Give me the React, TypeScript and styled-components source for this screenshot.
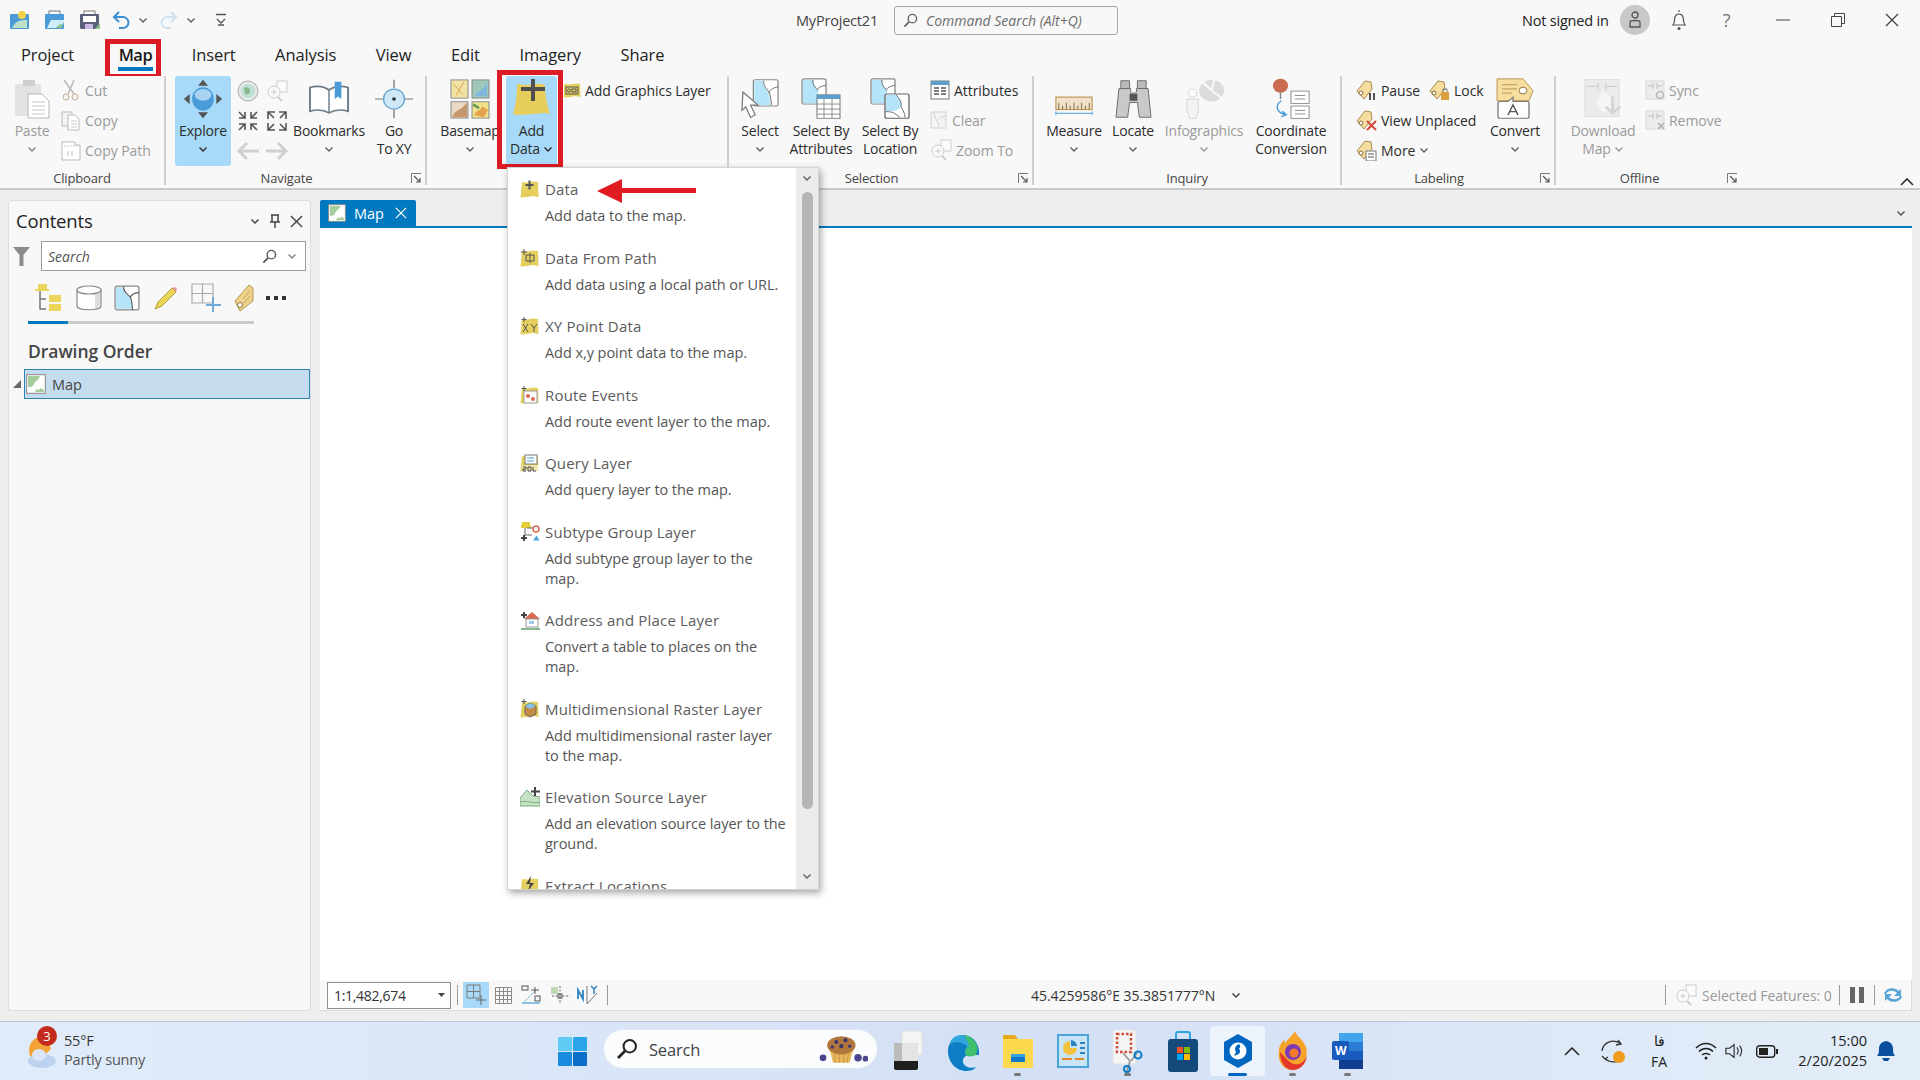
import React from 'react';
import styled, { createGlobalStyle } from 'styled-components';

const Global = createGlobalStyle`
  html, body { margin: 0; padding: 0; background: #eeeeee; }
  body { font-family: "Open Sans", "Noto Sans", sans-serif; }
  #root { width: 1920px; height: 1080px; overflow: hidden; }
  * { box-sizing: border-box; }
`;

const Page = styled.div`
  width: 1920px; height: 1080px; display: flex; flex-direction: column; position: relative; color: #333; overflow: hidden;
`;
const TitleBar = styled.div`
  height: 40px; background: #f8f8f8; display: flex; align-items: center; padding-left: 9px; flex: none;
`;
const Qat = styled.div`
  width: 787px; flex: none; display: flex; align-items: center; gap: 13px;
`;
const QatSlot = styled.span<{ $ml: number }>`
  display: inline-flex; margin-left: ${p => p.$ml}px;
`;
const ProjectName = styled.div`
  width: 98px; flex: none; font-size: 14.5px; color: #444; letter-spacing: -.2px;
`;
const CommandSearch = styled.div`
  width: 224px; flex: none; height: 29px; border: 1px solid #a5a5a5; border-radius: 3px; display: flex; align-items: center; gap: 8px; padding-left: 8px;
  font-style: italic; font-size: 14px; color: #6e6e6e; letter-spacing: 0; white-space: nowrap;
`;
const TitleRight = styled.div`
  margin-left: 404px; display: flex; align-items: center; font-size: 14.5px; color: #222; letter-spacing: -.2px; white-space: nowrap; flex: none;
`;
const Avatar = styled.div`
  width: 30px; height: 30px; border-radius: 50%; background: #c8c8c8; margin-left: 11px; display: flex; align-items: center; justify-content: center; flex: none;
`;
const WinIcon = styled.div<{ $w: number }>`
  width: ${p => p.$w}px; display: flex; justify-content: center; font-size: 18px; color: #777; flex: none;
`;
const TabRow = styled.div`
  height: 36px; background: #f8f8f8; display: flex; align-items: flex-start; padding-left: 21px; gap: 39.5px; font-size: 16.5px; color: #222; flex: none;
`;
const Tab = styled.div<{ $on?: boolean }>`
  position: relative; height: 30px; line-height: 30px; letter-spacing: -.1px;
  ${p => p.$on ? `
    font-weight: 600; color: #1a1a1a; letter-spacing: -.5px; margin-left: 5px;
    &::before { content: ""; position: absolute; left: -1px; right: -1px; bottom: -1px; height: 4px; background: #0079c1; }
    &::after { content: ""; position: absolute; left: -14px; right: -9px; top: -1px; bottom: -9px; border: 5px solid #dc1c24; }
  ` : ''}
`;
const Ribbon = styled.div`
  height: 114px; background: #f8f8f8; border-bottom: 2px solid #c9c9c9; display: flex; flex: none; position: relative;
`;
const Group = styled.div<{ $w: number; $pad: number; $last?: boolean }>`
  width: ${p => p.$w}px; flex: none; height: 109px; ${p => p.$last ? '' : 'border-right: 2px solid #cfcfcf;'}
  display: flex; flex-direction: column; position: relative; padding-left: ${p => p.$pad}px;
`;
const GroupBody = styled.div`
  height: 91px; display: flex; align-items: flex-start;
`;
const GroupLabel = styled.div<{ $launch?: boolean }>`
  position: absolute; left: 0; right: 0; bottom: -4px; height: 22px; line-height: 22px; text-align: center; font-size: 13px; color: #444; letter-spacing: -.15px;
  padding-right: ${p => p.$launch ? 18 : 0}px;
`;
const Launcher = styled.span`
  position: absolute; right: 3px; bottom: 1px; display: inline-flex;
`;
const Big = styled.div<{ $w: number; $on?: boolean; $off?: boolean; $mr?: number; $ann?: boolean }>`
  width: ${p => p.$w}px; flex: none; height: 90px; display: flex; flex-direction: column; align-items: center; position: relative;
  font-size: 14px; line-height: 18px; letter-spacing: -.2px; text-align: center; white-space: nowrap; border-radius: 3px;
  color: ${p => p.$off ? '#9a9a9a' : '#2c2c2c'};
  background: ${p => p.$on ? '#a6daf8' : 'transparent'};
  margin-right: ${p => p.$mr || 0}px;
  ${p => p.$ann ? `
    &::after { content: ""; position: absolute; left: -9px; right: -6px; top: -6px; bottom: -3px; border: 5px solid #dc1c24; }
  ` : ''}
`;
const BigIcon = styled.div`
  height: 46px; display: flex; align-items: center; justify-content: center; flex: none;
`;
const Chev = styled.span<{ $inline?: boolean }>`
  display: inline-flex; align-items: center; justify-content: center; height: 18px;
  ${p => p.$inline ? 'margin-left: 3px; vertical-align: top;' : ''}
`;
const SmallCol = styled.div<{ $w?: number }>`
  display: flex; flex-direction: column; margin-top: -1px; ${p => p.$w ? `width: ${p.$w}px; flex: none;` : ''}
`;
const SmallBtn = styled.div<{ $off?: boolean; $mr?: number }>`
  height: 30px; display: flex; align-items: center; gap: 4px; font-size: 14px; letter-spacing: -.05px; white-space: nowrap;
  color: ${p => p.$off ? '#9a9a9a' : '#2c2c2c'}; margin-right: ${p => p.$mr || 0}px;
`;
const SmallRow = styled.div`
  display: flex; height: 30px;
`;
const NavGrid = styled.div`
  width: 58px; flex: none; display: grid; grid-template-columns: 29px 29px; grid-auto-rows: 30px; justify-items: center; align-items: center;
`;
const Collapse = styled.span`
  position: absolute; right: 6px; bottom: 2px; display: inline-flex;
`;
const Main = styled.div`
  flex: none; height: 831px; background: #eeeeee; display: flex; padding: 10px 8px 10px 8px; gap: 9px;
`;
const ContentsPanel = styled.div`
  width: 303px; flex: none; background: #f8f8f8; border: 1px solid #dedede; border-radius: 3px 3px 0 0; display: flex; flex-direction: column;
`;
const PanelHead = styled.div`
  height: 40px; display: flex; align-items: center; padding: 0 7px 2px 7px; font-size: 18.5px; color: #222; letter-spacing: -.15px; flex: none;
`;
const PanelTitle = styled.div`
  flex: 1;
`;
const PanelTools = styled.div`
  display: flex; align-items: center; gap: 9px; margin-top: 2px;
`;
const FilterRow = styled.div`
  display: flex; align-items: center; padding: 0 4px; gap: 11px; flex: none; height: 30px;
`;
const SearchBox = styled.div`
  width: 266px; height: 30px; background: #fff; border: 1px solid #9a9a9a; display: flex; align-items: center; padding: 0 8px 0 6px; gap: 10px;
  font-style: italic; font-size: 14px; color: #555; letter-spacing: 0;
`;
const SearchText = styled.div`
  flex: 1;
`;
const ViewTabs = styled.div`
  display: flex; align-items: center; margin: 13px 0 0 24px; height: 28px; flex: none; gap: 12.5px;
`;
const ViewRule = styled.div`
  margin: 9px 0 0 19px; width: 226px; height: 3px; background: #c9c9c9; flex: none;
`;
const ViewRuleOn = styled.div`
  width: 40px; height: 3px; background: #0079c1;
`;
const Heading = styled.div`
  margin: 15px 0 0 19px; font-size: 17.5px; font-weight: 600; color: #444; letter-spacing: -.05px; height: 24px; line-height: 24px; flex: none;
`;
const TreeRow = styled.div`
  margin: 6px 0 0; display: flex; align-items: center; flex: none; height: 30px;
`;
const TreeArrow = styled.span`
  width: 15px; flex: none; display: inline-flex; justify-content: flex-end; padding-right: 3px;
`;
const TreeItem = styled.div`
  flex: 1; height: 30px; background: #c4dcee; border: 1px solid #2d86b8; display: flex; align-items: center; padding-left: 1px; gap: 6px; font-size: 14.5px; color: #444;
`;
const MapDock = styled.div`
  width: 1592px; flex: none; display: flex; flex-direction: column;
`;
const DockTabs = styled.div`
  height: 28px; display: flex; align-items: flex-end; justify-content: space-between; border-bottom: 2px solid #0079c1; flex: none; padding-right: 6px;
`;
const DockTab = styled.div`
  width: 96px; height: 26px; background: #0079c1; color: #fff; font-size: 14.5px; display: flex; align-items: center; padding-left: 8px; gap: 8px; border-radius: 2px 2px 0 0;
`;
const DockClose = styled.span`
  display: inline-flex; margin-left: 3px;
`;
const DockChevron = styled.span`
  display: inline-flex; align-self: center;
`;
const MapCanvas = styled.div`
  flex: 1; background: #fff;
`;
const StatusBar = styled.div`
  height: 31px; background: #f8f8f8; border-bottom: 1px solid #dcdcdc; border-right: 1px solid #dcdcdc; display: flex; align-items: center; padding-left: 7px; flex: none; font-size: 14px; color: #333; letter-spacing: -.3px;
`;
const ScaleBox = styled.div`
  width: 125px; height: 27px; border: 1px solid #8f8f8f; background: #fff; display: flex; align-items: center; justify-content: space-between; padding: 0 5px 0 6px;
`;
const StatusSep = styled.span<{ $ml: number }>`
  width: 1px; height: 20px; background: #9a9a9a; margin-left: ${p => p.$ml}px; flex: none;
`;
const StatusBtn = styled.span<{ $on?: boolean; $w: number; $ml?: number }>`
  width: ${p => p.$w}px; height: 26px; display: inline-flex; align-items: center; justify-content: center; flex: none;
  background: ${p => p.$on ? '#a6daf8' : 'transparent'}; margin-left: ${p => p.$ml || 0}px;
`;
const Coords = styled.div`
  margin-left: 423px; width: 215px; display: flex; align-items: center; gap: 16px; white-space: nowrap; flex: none; letter-spacing: -.05px;
`;
const Selected = styled.div`
  margin-left: 9px; display: flex; align-items: center; gap: 5px; color: #9a9a9a; white-space: nowrap; width: 165px; flex: none; letter-spacing: -.05px;
`;
const Taskbar = styled.div`
  flex: 1; border-top: 1px solid #b9c5d2; background: linear-gradient(90deg,#e0ecf9 0%,#d9e6f7 30%,#d3e0f5 55%,#dbe6f6 75%,#e4eef9 100%); display: flex; align-items: center; position: relative;
`;
const Weather = styled.div`
  width: 558px; flex: none; display: flex; align-items: center; padding-left: 27px; gap: 7px;
`;
const WeatherIcon = styled.div`
  position: relative; width: 30px; height: 36px; flex: none; margin-top: 2px;
`;
const Badge = styled.div`
  position: absolute; left: 10px; top: -8px; width: 20px; height: 20px; border-radius: 50%; background: #c42b1c; color: #fff; font-size: 13px; display: flex; align-items: center; justify-content: center;
`;
const WeatherText = styled.div`
  font-size: 14.5px; line-height: 19.5px; color: #333; letter-spacing: -.2px; margin-top: -2px;
`;
const WeatherSub = styled.div`
  color: #555;
`;
const StartBtn = styled.div`
  width: 46px; flex: none; display: flex;
`;
const TaskSearch = styled.div`
  width: 273px; height: 38px; background: #fbfcfe; border-radius: 19px; box-shadow: 0 0 0 1px #dfe6f0; display: flex; align-items: center; padding-left: 12px; gap: 11px; font-size: 16.5px; color: #444; flex: none; margin-top: -4px; letter-spacing: -.2px; position: relative;
`;
const Muffin = styled.span`
  position: absolute; right: 9px; top: 5px; display: inline-flex;
`;
const Apps = styled.div`
  display: flex; margin-left: 3px; flex: none;
`;
const AppSlot = styled.div<{ $active?: boolean; $dot?: boolean }>`
  width: 55px; height: 50px; display: flex; align-items: center; justify-content: center; position: relative; border-radius: 4px;
  ${p => p.$active ? 'background: #eef4fb;' : ''}
  ${p => p.$dot ? `&::after { content: ""; position: absolute; left: 50%; bottom: 0; width: ${p.$active ? 19 : 7}px; margin-left: ${p.$active ? -9.5 : -3.5}px; height: 3px; border-radius: 2px; background: ${p.$active ? '#0067c0' : '#777'}; }` : ''}
`;
const Tray = styled.div`
  display: flex; align-items: center; margin-left: 183px; flex: none; color: #1c1c1c;
`;
const TrayIcon = styled.span<{ $w: number; $ml?: number }>`
  width: ${p => p.$w}px; display: inline-flex; justify-content: center; align-items: center; flex: none; margin-left: ${p => p.$ml || 0}px;
`;
const Lang = styled.div`
  width: 38px; text-align: center; font-size: 14px; line-height: 21px; color: #222; flex: none;
`;
const Clock = styled.div`
  width: 78px; text-align: right; font-size: 14.5px; line-height: 20px; color: #222; flex: none; letter-spacing: 0;
`;
const Menu = styled.div`
  position: absolute; left: 507px; top: 167px; width: 312px; height: 723px; background: #fff; border: 1px solid #d4d4d4; display: flex; overflow: hidden;
  box-shadow: 2px 3px 7px rgba(0,0,0,.35); z-index: 3;
`;
const MenuList = styled.div`
  flex: 1; padding: 11px 0 0 12px; overflow: hidden;
`;
const MenuItem = styled.div<{ $lines?: number }>`
  display: flex; gap: 5px; height: ${p => p.$lines === 2 ? 88.5 : 68.5}px;
`;
const MenuIcon = styled.span`
  width: 20px; height: 20px; flex: none; display: inline-flex;
`;
const MenuTitle = styled.div`
  font-size: 15px; line-height: 20px; color: #5c5c5c; margin-bottom: 7px; letter-spacing: .18px; white-space: nowrap;
`;
const MenuDesc = styled.div`
  font-size: 14.5px; line-height: 20px; color: #555; white-space: pre-line; letter-spacing: -.06px;
`;
const ScrollCol = styled.div`
  width: 22px; flex: none; background: #ebebeb; display: flex; flex-direction: column; align-items: center; padding-top: 7px;
`;
const ScrollThumb = styled.div`
  width: 11px; height: 617px; background: #b5b5b5; border-radius: 6px; margin: 10px 0 64px; flex: none;
`;
const RedArrow = styled.svg`
  position: absolute; left: 597px; top: 178px; z-index: 4;
`;

type I = { s?: number };
const C = ({ d = '#666', o = 1 }: { d?: string; o?: number }) => (
  <svg width="10" height="7" viewBox="0 0 10 7" opacity={o}><path d="M1.5 1.5 5 5l3.5-3.5" fill="none" stroke={d} strokeWidth="1.5" /></svg>
);
const X = ({ s = 14, c = '#444', w = 1.3 }: { s?: number; c?: string; w?: number }) => (
  <svg width={s} height={s} viewBox="0 0 14 14"><path d="M1 1l12 12M13 1 1 13" stroke={c} strokeWidth={w} /></svg>
);
const MapLines = () => <path d="M9 1c-1 5 3 7 6 10 2 4 2 8 2 12M15 11c2-3 4-4 8-4" fill="none" stroke="#555" strokeWidth="1" />;
const MapSheet = ({ s = 26 }: I) => (
  <svg width={s} height={s} viewBox="0 0 24 24"><rect x="1" y="1" width="22" height="22" rx="2" fill="#fff" stroke="#888" strokeWidth="1.2" /><path d="M2 2h7c-1 5 3 7 6 9 2 4 2 8 2 11H2z" fill="#b5e3f7" /><MapLines /></svg>
);
const Launch = () => (
  <svg width="11" height="11" viewBox="0 0 11 11"><path d="M.5 10V.5H10" fill="none" stroke="#777" /><path d="M3 3l6 6M9 5v4H5" fill="none" stroke="#555" strokeWidth="1.2" /></svg>
);
const Folder = ({ s = 20, plus = false, children }: { s?: number; plus?: boolean; children?: React.ReactNode }) => (
  <svg width={s} height={s} viewBox="0 0 20 20">
    <path d="M2 3l5 .5 6-1 5 .5.5 15-6-1-5 1-7 .5z" fill="#e5cf5f" />
    {plus && <path d="M9.5 1.5v9M5.5 6h8" stroke="#555" strokeWidth="2" />}
    {children}
  </svg>
);
const Tag = ({ children }: { children?: React.ReactNode }) => (
  <svg width="22" height="22" viewBox="0 0 22 22">
    <path d="M2 12 10 2l6 1 1 7-8 10z" fill="#f6dda0" stroke="#a88a52" /><circle cx="6" cy="14" r="2" fill="#fff" stroke="#8a6d3b" />{children}
  </svg>
);
const Paste = () => (
  <svg width="36" height="42" viewBox="0 0 36 42"><rect x="1" y="6" width="26" height="32" rx="2" fill="#e3e3e3" /><rect x="9" y="2" width="12" height="6" rx="1" fill="#cfcfcf" /><path d="M14 16h14l7 7v17H14z" fill="#fff" stroke="#b5b5b5" /><path d="M18 24h13M18 28h13M18 32h13M18 36h13" stroke="#c5c5c5" /></svg>
);
const Cut = () => <svg width="20" height="22" viewBox="0 0 20 22"><path d="M3 1l10 14M13 1 7 15" stroke="#b8b8b8" strokeWidth="1.5" /><circle cx="5" cy="18" r="3" fill="none" stroke="#c2a98c" /><circle cx="14" cy="18" r="3" fill="none" stroke="#c2a98c" /></svg>;
const Copy = () => <svg width="20" height="22" viewBox="0 0 20 22"><path d="M1 3h10v14H1z" fill="#f4f4f4" stroke="#bbb" /><path d="M7 6h7l4 4v11H7z" fill="#fff" stroke="#bbb" /><path d="M10 12h6M10 15h6M10 18h6" stroke="#ccc" /></svg>;
const CopyPath = () => <svg width="20" height="22" viewBox="0 0 20 22"><path d="M1 3h13v3h5v15H1z" fill="#fff" stroke="#bbb" /><path d="M3 7h14" stroke="#ccc" strokeDasharray="2 1" /><path d="M7 12v5M11 12v5" stroke="#bbb" /></svg>;
const Explore = () => (
  <svg width="40" height="40" viewBox="0 0 48 48"><path d="M24 1l6 7H18zM24 47l-6-7h12zM1 24l7-6v12zM47 24l-7 6V18z" fill="#555" /><ellipse cx="24" cy="24" rx="13" ry="14" fill="#4a9bd8" /><ellipse cx="24" cy="19" rx="10" ry="7" fill="#a9d3f2" /></svg>
);
const Globe = () => <svg width="22" height="22" viewBox="0 0 22 22"><circle cx="11" cy="11" r="10" fill="#e8e8e8" stroke="#aaa" /><circle cx="11" cy="11" r="7" fill="#bfe0d4" /><path d="M7 8c3-2 6 0 6 3s-3 4-5 3z" fill="#89b88d" /></svg>;
const ZoomFull = () => <svg width="22" height="22" viewBox="0 0 22 22" opacity=".55"><rect x="11" y="1" width="10" height="11" fill="#fff" stroke="#aaa" /><circle cx="8" cy="12" r="6" fill="#fff" stroke="#aaa" /><path d="M5 12h6M8 9v6" stroke="#aaa" /><path d="M12 17l4 4" stroke="#b9a88f" strokeWidth="2" /></svg>;
const Arrows4 = ({ out }: { out?: boolean }) => (
  <svg width="22" height="22" viewBox="0 0 22 22"><g stroke="#555" strokeWidth="1.6" fill="none">
    {out ? <path d="M9 2H2v7M2 2l6 6M13 2h7v7M20 2l-6 6M9 20H2v-7M2 20l6-6M13 20h7v-7M20 20l-6-6" /> : <path d="M2 8h6V2M8 8 2 2M20 8h-6V2M14 8l6-6M2 14h6v6M8 14l-6 6M20 14h-6v6M14 14l6 6" />}
  </g></svg>
);
const Back = ({ flip }: { flip?: boolean }) => <svg width="24" height="20" viewBox="0 0 24 20" style={flip ? { transform: 'scaleX(-1)' } : undefined}><path d="M11 2 3 10l8 8M3 10h20" fill="none" stroke="#d0d0d0" strokeWidth="3" /></svg>;
const Bookmarks = () => <svg width="40" height="36" viewBox="0 0 42 44" preserveAspectRatio="none"><path d="M1 8c6-2 14-2 20 3 6-5 14-5 20-3v29c-6-2-14-2-20 2-6-4-14-4-20-2z" fill="#fff" stroke="#6d7b86" strokeWidth="2" /><path d="M21 11v28" stroke="#6d7b86" strokeWidth="1.5" /><path d="M27 1h7v21l-3.500-3-3.500 3z" fill="#4a9bd8" /></svg>;
const GoTo = () => <svg width="40" height="40" viewBox="0 0 42 48" preserveAspectRatio="none"><path d="M21 1v10M21 37v10M1 24h9M32 24h9" stroke="#777" strokeWidth="1.4" /><ellipse cx="21" cy="24" rx="11" ry="12" fill="#cfe8f8" stroke="#6aa7d0" strokeWidth="1.5" /><circle cx="21" cy="24" r="2" fill="#333" /></svg>;
const BasemapI = () => (
  <svg width="40" height="40" viewBox="0 0 40 44" preserveAspectRatio="none"><rect x="1" y="1" width="17" height="20" fill="#f2e2a4" stroke="#888" /><path d="M3 5l10 12M14 3 6 18" stroke="#d9a34f" /><rect x="22" y="1" width="17" height="20" fill="#9fc8b8" stroke="#888" /><path d="M24 19c5-8 8-4 13-16v16z" fill="#7fb7dd" /><rect x="1" y="25" width="17" height="18" fill="#ead9c5" stroke="#888" /><path d="M2 42c4-10 8-6 15-16v16z" fill="#c5976b" /><rect x="22" y="25" width="17" height="18" fill="#efe28d" stroke="#888" /><path d="M24 40c4-8 6-3 8-10l6 4-4 8z" fill="#e3a24b" /><path d="M23 28l6 4" stroke="#6ba35c" strokeWidth="3" /></svg>
);
const AddDataI = () => (
  <svg width="40" height="46" viewBox="0 0 40 46"><path d="M5 8c3 0 5 1 8 1 8 0 12-2 17-1l3 1c0 10 2 20 5 29-6-2-12 0-17 0-8 0-14 2-20 0 3-9 4-20 4-30z" fill="#e7ce5c" /><path d="M21 3v22M9 13h24" stroke="#4f4f4f" strokeWidth="4" /></svg>
);
const Graphics = () => <svg width="18" height="18" viewBox="0 0 18 18"><path d="M1 3l6 .5 5-1 5 .5.500 13-5-1-5 1-6.500.5z" fill="#e5cf5f" /><rect x="3" y="6" width="12" height="7" fill="none" stroke="#555" /><circle cx="6" cy="9.500" r="1.500" fill="none" stroke="#555" /><rect x="9" y="8" width="4" height="3" fill="none" stroke="#555" /></svg>;
const SelectI = () => <svg width="38" height="42" viewBox="0 0 40 48" preserveAspectRatio="none"><rect x="13" y="2" width="26" height="30" rx="2" fill="#fff" stroke="#888" strokeWidth="1.300" /><path d="M14 3h10c-2 5 3 10 5 14 1 5 2 9 2 14H14z" fill="#b5e3f7" /><path d="M24 3c-1 6 4 10 6 14 1 5 2 9 2 14M29 17c2-4 5-6 10-7" fill="none" stroke="#666" /><path d="M2 16l16 15-8 0 5 11-5 3-5-12-4 4z" fill="#fff" stroke="#777" strokeWidth="1.300" /></svg>;
const SelAttr = () => <svg width="40" height="42" viewBox="0 0 40 50" preserveAspectRatio="none"><rect x="1" y="1" width="24" height="30" rx="2" fill="#fff" stroke="#888" strokeWidth="1.300" /><path d="M2 2h11c-2 5 2 9 4 13v15H2z" fill="#b5e3f7" /><path d="M12 2c-1 6 3 10 5 13M16 14c2-3 5-5 9-5" fill="none" stroke="#666" /><rect x="16" y="20" width="23" height="28" fill="#fff" stroke="#777" /><rect x="16" y="20" width="23" height="5" fill="#5e9ecb" /><path d="M16 31h23M16 37h23M16 43h23M23 25v23M31 25v23" stroke="#888" /></svg>;
const SelLoc = () => <svg width="40" height="42" viewBox="0 0 40 50" preserveAspectRatio="none"><rect x="1" y="1" width="24" height="30" rx="2" fill="#fff" stroke="#888" strokeWidth="1.300" /><path d="M2 2h11c-2 5 2 9 4 13v15H2z" fill="#b5e3f7" /><path d="M12 2c-1 6 3 10 5 13M16 14c2-3 5-5 9-5" fill="none" stroke="#666" /><rect x="15" y="19" width="24" height="29" rx="2" fill="#fff" stroke="#666" strokeWidth="1.300" /><path d="M16 20h10c3 4 6 8 5 14-3 5-8 6-15 6z" fill="#b5e3f7" /><path d="M26 20c3 4 6 8 5 14 2 5 4 8 4 13M16 40c7 0 9 2 14 7" fill="none" stroke="#666" /></svg>;
const AttrI = () => <svg width="20" height="20" viewBox="0 0 20 20"><rect x="1" y="1" width="18" height="18" fill="#fff" stroke="#777" /><rect x="1" y="1" width="18" height="4" fill="#5e9ecb" /><path d="M4 8h5M11 8h5M4 11h5M11 11h5M4 14h5M11 14h5" stroke="#555" strokeWidth="1.300" /></svg>;
const ClearI = () => <svg width="18" height="20" viewBox="0 0 18 20" opacity=".5"><rect x="1" y="2" width="15" height="16" fill="#f1f1f1" stroke="#aaa" /><path d="M4 3c1 6 4 7 5 14M9 9c2-2 4-3 7-3" fill="none" stroke="#aaa" /></svg>;
const Measure = () => <svg width="40" height="46" viewBox="0 0 42 46"><rect x="2" y="21" width="38" height="13" fill="#f0e2cb" stroke="#c09a5e" strokeWidth="1.300" /><path d="M5 34v-7M9 34v-4M13 34v-7M17 34v-4M21 34v-7M25 34v-4M29 34v-7M33 34v-4M37 34v-7" stroke="#80663c" /><path d="M2 38h38M2 36v4M40 36v4" stroke="#4a9bd8" /></svg>;
const Bino = () => <svg width="37" height="40" viewBox="0 0 38 46" preserveAspectRatio="none"><path d="M6 2h9v9H6zM23 2h9v9h-9z" fill="#bbb" stroke="#666" /><path d="M4 11h12v9h6v-9h12l3 33H25l-2-17h-8l-2 17H1z" fill="#c9c9c9" stroke="#666" /><rect x="15" y="15" width="8" height="10" fill="#555" /><path d="M14 16h10" stroke="#fff" /></svg>;
const Info = () => <svg width="42" height="42" viewBox="0 0 44 50" opacity=".45" preserveAspectRatio="none"><circle cx="30" cy="15" r="13" fill="#bbb" /><path d="M30 15 20 4M30 15l12 10M30 15l3-14" stroke="#fff" strokeWidth="2" /><circle cx="10" cy="18" r="4.500" fill="#fff" stroke="#aaa" /><path d="M4 25h12v14l-2 9H7l-3-9z" fill="#eee" stroke="#aaa" /></svg>;
const Coord = () => <svg width="42" height="44" viewBox="0 0 44 50" preserveAspectRatio="none"><circle cx="11" cy="10" r="8" fill="#cb6b50" /><path d="M11 17v8" stroke="#888" strokeWidth="1.500" /><rect x="22" y="16" width="19" height="14" fill="#fff" stroke="#888" /><path d="M26 21h11M26 25h11" stroke="#888" /><rect x="22" y="33" width="19" height="14" fill="#fff" stroke="#888" /><path d="M26 38h11M26 42h11" stroke="#888" /><path d="M12 27c-7 5-6 13 5 16M13 39l4 4-5 2" fill="none" stroke="#4a9bd8" strokeWidth="1.600" /></svg>;
const Convert = () => <svg width="40" height="42" viewBox="0 0 40 50" preserveAspectRatio="none"><path d="M2 1h26l10 14-4 12-20 0-12 0z" fill="#f6dda0" stroke="#b5924e" /><path d="M7 8h15M7 13h15M7 18h10" stroke="#b5924e" /><circle cx="28" cy="15" r="4" fill="#fff" stroke="#8a6d3b" /><path d="M5 28h8l5-5v5h14a2 2 0 0 1 2 2v16a2 2 0 0 1-2 2H5a2 2 0 0 1-2-2V30a2 2 0 0 1 2-2z" fill="#fff" stroke="#777" strokeWidth="1.300" /><path d="M13 44l5-12 5 12M15 40h6" fill="none" stroke="#555" strokeWidth="1.500" /></svg>;
const Download = () => <svg width="40" height="42" viewBox="0 0 42 50" opacity=".45" preserveAspectRatio="none"><rect x="2" y="2" width="36" height="44" fill="#ddd" stroke="#bbb" /><path d="M4 10h12M24 10h12M16 6v8M24 6v8" stroke="#888" /><path d="M20 14l8 8 3 14-10 6-7-12z" fill="#f3f3f3" /><path d="M31 22v20M24 34l7 8 8-8" fill="none" stroke="#aaa" strokeWidth="3" /></svg>;
const SyncI = ({ rem }: { rem?: boolean }) => <svg width="20" height="20" viewBox="0 0 20 20" opacity=".5"><rect x="1" y="1" width="18" height="18" fill="#e2e2e2" stroke="#bbb" /><path d="M3 6h5M12 6h5M8 3v6M12 3v6" stroke="#888" />{rem ? <path d="M13 13l6 6M19 13l-6 6" stroke="#666" strokeWidth="1.500" /> : <circle cx="15" cy="15" r="3.500" fill="none" stroke="#777" strokeWidth="1.500" />}</svg>;

const MiniTreeI = () => <svg width="30" height="28" viewBox="0 0 30 28"><path d="M5 0h9v5H5z M2 5h14v2H2z" fill="#ecd558" /><path d="M7 7v18h6M7 15h6" fill="none" stroke="#777" strokeWidth="1.500" /><path d="M16 11h12v7H16zM16 20h12v7H16z" fill="#ecd558" /></svg>;
const Cyl = () => <svg width="26" height="26" viewBox="0 0 26 26"><path d="M1 5v16c0 5 24 5 24 0V5" fill="#fff" stroke="#888" strokeWidth="1.200" /><path d="M19 9v15l5-3V8z" fill="#ddd" /><ellipse cx="13" cy="5" rx="12" ry="4" fill="#fff" stroke="#888" strokeWidth="1.200" /></svg>;
const Pencil = () => <svg width="26" height="26" viewBox="0 0 26 26"><path d="M2 24l3-7L19 3l4 4L9 21z" fill="#ecd558" stroke="#b5a23a" /><path d="M19 3l4 4 1-3-2-2z" fill="#e79b8f" /></svg>;
const GridPlus = () => <svg width="30" height="30" viewBox="0 0 30 30"><path d="M1 1h21v19H1zM11.500 1v19M1 10.500h21" fill="none" stroke="#aaa" strokeWidth="1.200" /><path d="M22 14v15M15 22h15" stroke="#6ea9d7" strokeWidth="2" /></svg>;
const TagLg = () => <svg width="20" height="28" viewBox="0 0 20 28"><path d="M1 17 15 1l4 3v13L6 27z" fill="#ecd28a" stroke="#b69a4f" /><circle cx="6" cy="21" r="2.500" fill="#fff" stroke="#8a6d3b" /><path d="M9 15l7-8M10 19l6-7" stroke="#c2a75d" /></svg>;
const MapFile = ({ s = 20 }: { s?: number }) => (
  <svg width={s} height={s} viewBox="0 0 20 20"><rect x=".7" y=".7" width="18.6" height="18.600" fill="#fff" stroke="#888" /><path d="M2 2h12c-1 4-5 5-6 8s-3 3-6 3z" fill="#a6cd9e" /><path d="M9 18c1-3 3-4 4-2l2-2 3 2v2z" fill="#a6cd9e" /></svg>
);
const Search = ({ s = 16, c = '#555' }: { s?: number; c?: string }) => <svg width={s} height={s} viewBox="0 0 16 16"><circle cx="10" cy="6" r="4.500" fill="none" stroke={c} strokeWidth="1.500" /><path d="M6.500 9.500 1.500 14.500" stroke={c} strokeWidth="2" /></svg>;

const menuIcons: React.ReactNode[] = [
  <Folder plus />,
  <Folder><path d="M4 1v6M1 4h6M6 7h8v6H6z" fill="none" stroke="#555" /><path d="M10 5v10" stroke="#555" /></Folder>,
  <Folder><path d="M4 1v5M1.500 3.500h5" stroke="#555" /><path d="M3 8l5 8M8 8l-5 8M11 8l3 4 3-4M14 12v4" fill="none" stroke="#555" /></Folder>,
  <Folder><path d="M4 1v5M1.500 3.500h5" stroke="#555" /><rect x="4" y="6" width="13" height="12" fill="#fff" stroke="#999" /><circle cx="8" cy="11" r="2" fill="#d9694f" /><circle cx="13" cy="14" r="2" fill="#d9694f" /></Folder>,
  <Folder><rect x="5" y="2" width="12" height="9" fill="#fff" stroke="#777" /><path d="M7 5h7M7 8h7" stroke="#4a9bd8" /><rect x="2" y="12" width="17" height="7" fill="#fff" opacity=".5" /><path d="M3 14h3v2H3v2h3M8 14h3v4H8zM13 14v4h3" fill="none" stroke="#444" /></Folder>,
  <svg width="20" height="20" viewBox="0 0 20 20"><rect x="2" y="0" width="8" height="3" fill="#e7ce3c" /><rect x="1" y="3" width="10" height="3" fill="#e7ce3c" /><path d="M5 6v7h7M7 6h6" fill="none" stroke="#666" /><circle cx="16" cy="7" r="3" fill="#fff" stroke="#d9694f" strokeWidth="1.500" /><path d="M1 16h6M4 13v6" stroke="#444" strokeWidth="2" /><path d="M13 18.500l3.500-5 3 5z" fill="#4aa5d8" /></svg>,
  <svg width="20" height="20" viewBox="0 0 20 20"><path d="M4 9 12 2l8 7z" fill="#d9694f" /><rect x="6" y="9" width="12" height="8" fill="#fff" stroke="#999" /><rect x="9" y="11" width="5" height="3" fill="#9cc9ea" /><path d="M1 5h6M4 2v6" stroke="#444" strokeWidth="2" /><path d="M1 19h19" stroke="#5ba06a" strokeWidth="1.500" /></svg>,
  <Folder><path d="M4 0v5M1.500 2.500h5" stroke="#555" /><path d="M5 7l5-3 6 3v8l-6 3-5-3z" fill="#c78b49" stroke="#666" /><path d="M5 7l5 3 6-3-6-3z" fill="#86c3e8" /></Folder>,
  <svg width="20" height="20" viewBox="0 0 20 20"><path d="M0 11 7 3l6 6 7 1v9H0z" fill="#c6e3c5" stroke="#7aa87f" /><path d="M0 15c7-2 12 2 20 0" fill="none" stroke="#7aa87f" /><path d="M15 0v9M11 4.500h9" stroke="#444" strokeWidth="2" /></svg>,
  <Folder><path d="M11 0 6 8h4l-2 7 6-8h-4z" fill="#444" /></Folder>,
];
const menu: [string, string][] = [
  ['Data', 'Add data to the map.'],
  ['Data From Path', 'Add data using a local path or URL.'],
  ['XY Point Data', 'Add x,y point data to the map.'],
  ['Route Events', 'Add route event layer to the map.'],
  ['Query Layer', 'Add query layer to the map.'],
  ['Subtype Group Layer', 'Add subtype group layer to the\nmap.'],
  ['Address and Place Layer', 'Convert a table to places on the\nmap.'],
  ['Multidimensional Raster Layer', 'Add multidimensional raster layer\nto the map.'],
  ['Elevation Source Layer', 'Add an elevation source layer to the\nground.'],
  ['Extract Locations', ''],
];
const tabs = ['Project', 'Map', 'Insert', 'Analysis', 'View', 'Edit', 'Imagery', 'Share'];

const Muffinsvg = () => (
  <svg width="50" height="29" viewBox="0 0 60 34"><circle cx="6" cy="27" r="4" fill="#4b4590" /><circle cx="48" cy="27" r="4.500" fill="#4b4590" /><circle cx="57" cy="28" r="3.500" fill="#4b4590" /><path d="M14 17h28l-4 16H18z" fill="#e8b85e" /><path d="M19 18l2 15M25 18l1 15M31 18l0 15M37 18l-2 15" stroke="#c48f3c" /><ellipse cx="28" cy="12" rx="17" ry="11" fill="#b0763c" /><circle cx="22" cy="8" r="2.500" fill="#3d3570" /><circle cx="33" cy="6" r="2.500" fill="#3d3570" /><circle cx="28" cy="13" r="2.500" fill="#3d3570" /><circle cx="38" cy="13" r="2" fill="#3d3570" /><circle cx="17" cy="14" r="2" fill="#3d3570" /></svg>
);

const apps: { el: React.ReactNode; dot?: boolean; active?: boolean }[] = [
  { el: <svg width="30" height="42" viewBox="0 0 30 42"><rect x="9" y="1" width="20" height="24" rx="2" fill="#f4f4f4" stroke="#e2e2e2" /><rect x="1" y="13" width="24" height="27" rx="2" fill="#1f1f1f" /><rect x="1" y="13" width="17" height="18" fill="#bbb" /><rect x="9" y="13" width="16" height="18" fill="#e4e4e4" /></svg> },
  { el: <svg width="32" height="42" viewBox="0 0 32 42"><path d="M16 5C7 5 1 13 1 21c0 11 8 20 18 20 4 0 8-1 10-4-5 2-12 0-13-5-1-4 3-7 7-7h9c1-12-7-20-16-20z" fill="#0d7ec6" /><path d="M3 14C8 2 26 2 30 16c1 4 0 8-3 10-5 1-9 0-9-3 0-4 2-5 2-7-3-5-11-6-17-2z" fill="#3fc06c" /><path d="M16 5C7 5 3 10 3 14c6-3 12-2 17 2 2 3 0 4-1 6 2-1 5-8 0-13-1-2-2-4-3-4z" fill="#30a6dc" /></svg> },
  { dot: true, el: <svg width="32" height="38" viewBox="0 0 32 38"><path d="M1 3h12l3 4h15v28H1z" fill="#e7a91d" /><rect x="1" y="7" width="30" height="29" fill="#fcd84c" /><path d="M9 24h14v6H9z" fill="#0f78c9" /><path d="M9 22h14v3H9z" fill="#33a3e6" /></svg> },
  { el: <svg width="32" height="34" viewBox="0 0 32 34"><rect x="1" y="1" width="30" height="32" fill="#c9e4f6" stroke="#4da6da" strokeWidth="2" /><path d="M13 7a7 7 0 1 0 7 7h-7z" fill="#f5c33b" /><path d="M14 6a7 7 0 0 1 6 6h-6z" fill="#2d82bf" /><path d="M23 9h5M23 14h5M23 19h5" stroke="#2d82bf" strokeWidth="2" /><path d="M5 25h10M18 25h9" stroke="#e28a2a" strokeWidth="2" /></svg> },
  { dot: true, el: <svg width="32" height="44" viewBox="0 0 32 44"><rect x="1" y="1" width="23" height="34" rx="3" fill="#f5f5f5" stroke="#e5e5e5" /><path d="M5 5h14v18H5z" fill="none" stroke="#d04b35" strokeWidth="2.500" strokeDasharray="2.500 2" /><path d="M11 24l7 8M25 24l-6 8M18 32l-3 10" stroke="#999" strokeWidth="1.800" /><circle cx="26" cy="26" r="3.500" fill="none" stroke="#0d7ec6" strokeWidth="2" /><circle cx="15" cy="40" r="3" fill="none" stroke="#0d7ec6" strokeWidth="2" /></svg> },
  { el: <svg width="30" height="42" viewBox="0 0 30 42"><path d="M8 10V4a2 2 0 0 1 2-2h10a2 2 0 0 1 2 2v6" fill="none" stroke="#2ea4e0" strokeWidth="2" /><rect x="0" y="9" width="30" height="33" rx="3" fill="#144a7b" /><rect x="9" y="17" width="6" height="6" fill="#f25022" /><rect x="16" y="17" width="6" height="6" fill="#7fba00" /><rect x="9" y="24" width="6" height="6" fill="#00a4ef" /><rect x="16" y="24" width="6" height="6" fill="#ffb900" /></svg> },
  { dot: true, active: true, el: <svg width="30" height="36" viewBox="0 0 30 36"><path d="M15 1l14 8v18l-14 8-14-8V9z" fill="#0067c0" /><circle cx="15" cy="18" r="8.500" fill="#fff" /><path d="M16 11c-4 2-5 5-3 8l-2 4 5-2c2-3 1-4 0-5 1-1 2-3 0-5z" fill="#0067c0" /></svg> },
  { dot: true, el: <svg width="30" height="42" viewBox="0 0 30 42"><path d="M17 1c1 5 8 8 11 16 3 11-4 23-14 23C5 40-1 31 1 20c0-4 3-8 5-10 1 1 1 3 1 4 2-5 6-6 10-13z" fill="#f5a32a" /><path d="M2 22c0 10 5 18 13 18 7 0 13-6 14-14-4 8-9 9-13 8-5-1-8-6-14-12z" fill="#e6352a" /><circle cx="15" cy="22" r="8" fill="#7d3ab5" /><circle cx="16" cy="23" r="4.500" fill="#f47a2c" /></svg> },
  { dot: true, el: <svg width="32" height="38" viewBox="0 0 32 38"><rect x="7" y="1" width="24" height="36" rx="2" fill="#2b7cd3" /><rect x="7" y="1" width="24" height="9" fill="#41a5ee" /><rect x="7" y="19" width="24" height="9" fill="#185abd" /><rect x="7" y="28" width="24" height="9" fill="#103f91" /><rect x="0" y="9" width="17" height="19" rx="2" fill="#185abd" /><text x="3" y="23" fontSize="12" fontWeight="700" fill="#fff" fontFamily="Open Sans">W</text></svg> },
];

export default function App() {
  return (
    <Page>
      <Global />
      <TitleBar>
        <Qat>
          <svg width="22" height="20" viewBox="0 0 22 20"><rect x="1" y="4" width="19" height="15" rx="1" fill="#4a9bd8" /><path d="M3 18c3-6 6-8 15-8v8z" fill="#bfe0c8" /><circle cx="13" cy="5" r="4" fill="#f4cf4a" /></svg>
          <svg width="22" height="20" viewBox="0 0 22 20"><rect x="5" y="1" width="11" height="4" fill="none" stroke="#777" /><rect x="1" y="4" width="19" height="15" rx="1" fill="#4a9bd8" /><path d="M3 18l4-8h14l-4 8z" fill="#d3ecf9" /><path d="M12 18c2-3 4-4 6-4v4z" fill="#8cc08c" /></svg>
          <svg width="22" height="20" viewBox="0 0 22 20"><rect x="5" y="1" width="11" height="4" fill="none" stroke="#777" /><rect x="1" y="4" width="19" height="15" rx="1" fill="#5b6078" /><rect x="4" y="6" width="13" height="6" fill="#fff" /><rect x="6" y="14" width="8" height="5" fill="#c9b8e4" /><path d="M16 19l5-6v6z" fill="#8cc08c" /></svg>
          <QatSlot $ml={-2}><svg width="20" height="18" viewBox="0 0 20 18"><path d="M7 1 2 6l5 5" fill="none" stroke="#3b8ed0" strokeWidth="2" /><path d="M2 6h9a5.500 5.500 0 0 1 0 11H7" fill="none" stroke="#3b8ed0" strokeWidth="2" /></svg></QatSlot>
          <QatSlot $ml={-7}><C /></QatSlot>
          <QatSlot $ml={-3}><svg width="20" height="18" viewBox="0 0 20 18"><path d="M13 1l5 5-5 5" fill="none" stroke="#cfe2f2" strokeWidth="2" /><path d="M18 6H9a5.500 5.500 0 0 0 0 11h4" fill="none" stroke="#cfe2f2" strokeWidth="2" /></svg></QatSlot>
          <QatSlot $ml={-5}><C /></QatSlot>
          <QatSlot $ml={6}><svg width="12" height="14" viewBox="0 0 12 14"><path d="M1 1.500h10" stroke="#555" strokeWidth="1.500" /><path d="M2 6l4 4 4-4M3 12h6" fill="none" stroke="#555" strokeWidth="1.300" /></svg></QatSlot>
        </Qat>
        <ProjectName>MyProject21</ProjectName>
        <CommandSearch><Search s={15} c="#666" />Command Search (Alt+Q)</CommandSearch>
        <TitleRight>
          Not signed in
          <Avatar><svg width="14" height="18" viewBox="0 0 14 18"><circle cx="7" cy="4" r="3" fill="none" stroke="#555" strokeWidth="1.300" /><path d="M2 16V11c0-2 10-2 10 0v5z" fill="none" stroke="#555" strokeWidth="1.300" /></svg></Avatar>
          <WinIcon $w={58}><svg width="18" height="22" viewBox="0 0 18 22"><path d="M9 1v2M3 16c2-2 1-5 2-8 1-4 7-4 8 0 1 3 0 6 2 8z" fill="none" stroke="#555" strokeWidth="1.200" /><circle cx="9" cy="19.500" r="1.500" fill="#555" /></svg></WinIcon>
          <WinIcon $w={38}>?</WinIcon>
          <WinIcon $w={74}><svg width="14" height="2" viewBox="0 0 14 2"><path d="M0 1h14" stroke="#444" /></svg></WinIcon>
          <WinIcon $w={36}><svg width="14" height="14" viewBox="0 0 14 14"><path d="M.5 3.500h10v10H.500zM3.500 3.500V.5h10v10h-3" fill="none" stroke="#444" /></svg></WinIcon>
          <WinIcon $w={72}><X s={14} /></WinIcon>
        </TitleRight>
      </TitleBar>
      <TabRow>
        {tabs.map(t => <Tab key={t} $on={t === 'Map'}>{t}</Tab>)}
      </TabRow>
      <Ribbon>
        <Group $w={166} $pad={12}>
          <GroupBody>
            <Big $w={40} $mr={9} $off><BigIcon><Paste /></BigIcon>Paste<Chev><C d="#888" /></Chev></Big>
            <SmallCol>
              <SmallBtn $off><Cut />Cut</SmallBtn>
              <SmallBtn $off><Copy />Copy</SmallBtn>
              <SmallBtn $off><CopyPath />Copy Path</SmallBtn>
            </SmallCol>
          </GroupBody>
          <GroupLabel>Clipboard</GroupLabel>
        </Group>
        <Group $w={261} $pad={9}>
          <GroupBody>
            <Big $w={56} $mr={2} $on><BigIcon><Explore /></BigIcon>Explore<Chev><C d="#333" /></Chev></Big>
            <NavGrid>
              <Globe /><ZoomFull />
              <Arrows4 /><Arrows4 out />
              <Back /><Back flip />
            </NavGrid>
            <Big $w={76} $mr={2}><BigIcon><Bookmarks /></BigIcon>Bookmarks<Chev><C /></Chev></Big>
            <Big $w={50}><BigIcon><GoTo /></BigIcon>Go<br />To XY</Big>
          </GroupBody>
          <GroupLabel $launch>Navigate</GroupLabel>
          <Launcher><Launch /></Launcher>
        </Group>
        <Group $w={302} $pad={11}>
          <GroupBody>
            <Big $w={64} $mr={4}><BigIcon><BasemapI /></BigIcon>Basemap<Chev><C /></Chev></Big>
            <Big $w={51} $on $ann $mr={6}><BigIcon><AddDataI /></BigIcon>Add<span>Data<Chev $inline><C d="#333" /></Chev></span></Big>
            <SmallCol><SmallBtn><Graphics />Add Graphics Layer</SmallBtn></SmallCol>
          </GroupBody>
        </Group>
        <Group $w={305} $pad={8}>
          <GroupBody>
            <Big $w={46} $mr={2}><BigIcon><SelectI /></BigIcon>Select<Chev><C /></Chev></Big>
            <Big $w={72}><BigIcon><SelAttr /></BigIcon>Select By<br />Attributes</Big>
            <Big $w={66} $mr={7}><BigIcon><SelLoc /></BigIcon>Select By<br />Location</Big>
            <SmallCol>
              <SmallBtn><AttrI />Attributes</SmallBtn>
              <SmallBtn $off><ClearI />Clear</SmallBtn>
              <SmallBtn $off><ZoomFull />Zoom To</SmallBtn>
            </SmallCol>
          </GroupBody>
          <GroupLabel $launch>Selection</GroupLabel>
          <Launcher><Launch /></Launcher>
        </Group>
        <Group $w={308} $pad={9}>
          <GroupBody>
            <Big $w={62} $mr={2}><BigIcon><Measure /></BigIcon>Measure<Chev><C /></Chev></Big>
            <Big $w={52} $mr={2}><BigIcon><Bino /></BigIcon>Locate<Chev><C /></Chev></Big>
            <Big $w={86} $mr={2} $off><BigIcon><Info /></BigIcon>Infographics<Chev><C d="#999" /></Chev></Big>
            <Big $w={84}><BigIcon><Coord /></BigIcon>Coordinate<br />Conversion</Big>
          </GroupBody>
          <GroupLabel>Inquiry</GroupLabel>
        </Group>
        <Group $w={214} $pad={13}>
          <GroupBody>
            <SmallCol $w={130}>
              <SmallRow>
                <SmallBtn $mr={8}><Tag><path d="M15 14v7M19 14v7" stroke="#555" strokeWidth="2" /></Tag>Pause</SmallBtn>
                <SmallBtn><Tag><rect x="13" y="13" width="8" height="8" fill="#d9a23c" /><path d="M15 13v-3h4v3" fill="none" stroke="#777" /></Tag>Lock</SmallBtn>
              </SmallRow>
              <SmallBtn><Tag><path d="M12 12l9 9M21 12l-9 9" stroke="#d24a3a" strokeWidth="2" /></Tag>View Unplaced</SmallBtn>
              <SmallBtn><Tag><rect x="11" y="12" width="10" height="10" fill="#fff" stroke="#777" /><path d="M13 15h6M13 18h6" stroke="#555" /></Tag>More<Chev><C /></Chev></SmallBtn>
            </SmallCol>
            <Big $w={60}><BigIcon><Convert /></BigIcon>Convert<Chev><C /></Chev></Big>
          </GroupBody>
          <GroupLabel $launch>Labeling</GroupLabel>
          <Launcher><Launch /></Launcher>
        </Group>
        <Group $w={185} $pad={9} $last>
          <GroupBody>
            <Big $w={76} $mr={4} $off><BigIcon><Download /></BigIcon>Download<span>Map<Chev $inline><C d="#999" /></Chev></span></Big>
            <SmallCol>
              <SmallBtn $off><SyncI />Sync</SmallBtn>
              <SmallBtn $off><SyncI rem />Remove</SmallBtn>
            </SmallCol>
          </GroupBody>
          <GroupLabel $launch>Offline</GroupLabel>
          <Launcher><Launch /></Launcher>
        </Group>
        <Collapse><svg width="14" height="9" viewBox="0 0 14 9"><path d="M1 8l6-6 6 6" fill="none" stroke="#333" strokeWidth="1.600" /></svg></Collapse>
      </Ribbon>
      <Main>
        <ContentsPanel>
          <PanelHead>
            <PanelTitle>Contents</PanelTitle>
            <PanelTools>
              <C d="#444" />
              <svg width="12" height="14" viewBox="0 0 12 14"><path d="M2 1h8M3 1v7M9 1v7M1 8h10M6 8v6" fill="none" stroke="#444" strokeWidth="1.500" /></svg>
              <X s={13} c="#444" w={1.500} />
            </PanelTools>
          </PanelHead>
          <FilterRow>
            <svg width="17" height="21" viewBox="0 0 17 21"><path d="M0 1h17L10.500 9v11h-4V9z" fill="#8c8c8c" /></svg>
            <SearchBox>
              <SearchText>Search</SearchText>
              <Search s={15} />
              <C d="#888" />
            </SearchBox>
          </FilterRow>
          <ViewTabs>
            <MiniTreeI /><Cyl /><MapSheet s={26} /><Pencil /><GridPlus /><TagLg />
            <svg width="20" height="5" viewBox="0 0 20 5"><path d="M0 0h4v4H0zM8 0h4v4H8zM16 0h4v4h-4z" fill="#333" /></svg>
          </ViewTabs>
          <ViewRule><ViewRuleOn /></ViewRule>
          <Heading>Drawing Order</Heading>
          <TreeRow>
            <TreeArrow><svg width="8" height="8" viewBox="0 0 8 8"><path d="M8 0v8H0z" fill="#666" /></svg></TreeArrow>
            <TreeItem><MapFile />Map</TreeItem>
          </TreeRow>
        </ContentsPanel>
        <MapDock>
          <DockTabs>
            <DockTab><MapFile s={18} />Map<DockClose><X s={12} c="#fff" w={1.400} /></DockClose></DockTab>
            <DockChevron><C d="#555" /></DockChevron>
          </DockTabs>
          <MapCanvas />
          <StatusBar>
            <ScaleBox>1:1,482,674<svg width="7" height="4" viewBox="0 0 7 4"><path d="M0 0h7L3.500 4z" fill="#444" /></svg></ScaleBox>
            <StatusSep $ml={6} />
            <StatusBtn $w={26} $on $ml={5}><svg width="20" height="22" viewBox="0 0 20 22"><path d="M1 1h13v13H1zM7.500 1v13M1 7.500h13" fill="none" stroke="#7d7d7d" /><path d="M15 11v10M10 16h10" stroke="#666" /></svg></StatusBtn>
            <StatusBtn $w={28}><svg width="17" height="17" viewBox="0 0 17 17"><path d="M.5.5h16v16H.5zM4.500 1v16M8.500 1v16M12.500 1v16M1 4.500h16M1 8.500h16M1 12.500h16" fill="none" stroke="#8a8a8a" /></svg></StatusBtn>
            <StatusBtn $w={28}><svg width="20" height="20" viewBox="0 0 20 20"><path d="M1 19 15 5" stroke="#6aa9d7" strokeDasharray="3 1" /><rect x="1" y="1" width="6" height="4" fill="none" stroke="#555" /><path d="M14 2v7M10 5h8" stroke="#555" /><path d="M1 18h18" stroke="#8cc2e8" strokeWidth="2" /><rect x="14" y="11" width="5" height="5" fill="none" stroke="#555" /></svg></StatusBtn>
            <StatusBtn $w={29}><svg width="20" height="20" viewBox="0 0 20 20"><rect x="1" y="2" width="7" height="7" fill="#bcd8b5" /><path d="M10 1v18M2 11h18" stroke="#666" strokeDasharray="2 1.500" /><rect x="8" y="9" width="4" height="4" fill="none" stroke="#555" /></svg></StatusBtn>
            <StatusBtn $w={28}><svg width="22" height="20" viewBox="0 0 22 20"><path d="M1 14V5l5 9V5" fill="none" stroke="#2d82bf" strokeWidth="1.800" /><path d="M10 1v18l10-11" fill="none" stroke="#777" /><path d="M14 1l3 3 3-3M17 4v5" fill="none" stroke="#2d82bf" strokeWidth="1.500" /></svg></StatusBtn>
            <StatusSep $ml={5} />
            <Coords>45.4259586°E 35.3851777°N<C d="#444" /></Coords>
            <StatusSep $ml={419} />
            <Selected><ZoomFull />Selected Features: 0</Selected>
            <StatusSep $ml={-1} />
            <StatusBtn $w={34}><svg width="14" height="16" viewBox="0 0 14 16"><path d="M0 0h5v16H0zM9 0h5v16H9z" fill="#666" /></svg></StatusBtn>
            <StatusSep $ml={0} />
            <StatusBtn $w={36}><svg width="22" height="20" viewBox="0 0 22 20"><path d="M2 9c1-6 10-8 15-3l2-2v7h-7l3-3c-3-3-9-3-11 1z" fill="#5aa5d8" /><path d="M20 11c-1 6-10 8-15 3l-2 2V9h7l-3 3c3 3 9 3 11-1z" fill="#5aa5d8" /></svg></StatusBtn>
          </StatusBar>
        </MapDock>
      </Main>
      <Taskbar>
        <Weather>
          <WeatherIcon>
            <svg width="30" height="36" viewBox="0 0 30 36"><path d="M3 22C-1 10 8 0 20 3l4 12-12 12z" fill="#f2a33a" /><ellipse cx="15" cy="27" rx="14" ry="7" fill="#bcd2ef" /><ellipse cx="12" cy="21" rx="7" ry="6" fill="#dae6f7" /></svg>
            <Badge>3</Badge>
          </WeatherIcon>
          <WeatherText>55°F<WeatherSub>Partly sunny</WeatherSub></WeatherText>
        </Weather>
        <StartBtn><svg width="29" height="29" viewBox="0 0 29 29"><rect x="0" y="0" width="14" height="14" rx="1" fill="#5ecbf5" /><rect x="15" y="0" width="14" height="14" rx="1" fill="#2ba4ea" /><rect x="0" y="15" width="14" height="14" rx="1" fill="#1a8ce0" /><rect x="15" y="15" width="14" height="14" rx="1" fill="#0a6fc8" /></svg></StartBtn>
        <TaskSearch><Search s={22} c="#222" />Search<Muffin><Muffinsvg /></Muffin></TaskSearch>
        <Apps>
          {apps.map((a, i) => <AppSlot key={i} $dot={a.dot} $active={a.active}>{a.el}</AppSlot>)}
        </Apps>
        <Tray>
          <TrayIcon $w={28}><svg width="16" height="10" viewBox="0 0 16 10"><path d="M1 9l7-7 7 7" fill="none" stroke="#222" strokeWidth="1.500" /></svg></TrayIcon>
          <TrayIcon $w={54}><svg width="26" height="26" viewBox="0 0 26 26"><path d="M2 13C3 4 14 0 21 6M24 20C20 25 10 25 5 21" fill="none" stroke="#333" strokeWidth="1.300" /><path d="M18 2l3 4-5 1M2 18l3 3 3-2" fill="none" stroke="#333" strokeWidth="1.300" /><circle cx="19" cy="19" r="6" fill="#f09b1c" /></svg></TrayIcon>
          <Lang>فا<br />FA</Lang>
          <TrayIcon $w={39} $ml={8}><svg width="22" height="18" viewBox="0 0 22 18"><path d="M1 6c6-6 14-6 20 0M4 9.500c4-4 10-4 14 0M7 13c2-2 6-2 8 0" fill="none" stroke="#222" strokeWidth="1.500" /><circle cx="11" cy="16" r="1.500" fill="#222" /></svg></TrayIcon>
          <TrayIcon $w={20}><svg width="22" height="18" viewBox="0 0 22 18"><path d="M1 6h4l5-4v14l-5-4H1z" fill="none" stroke="#222" strokeWidth="1.200" /><path d="M13 5c2 2 2 6 0 8M16 3c3 3 3 9 0 12" fill="none" stroke="#222" strokeWidth="1.200" /></svg></TrayIcon>
          <TrayIcon $w={44}><svg width="22" height="13" viewBox="0 0 22 13"><rect x=".7" y=".7" width="18" height="11.500" rx="3" fill="none" stroke="#222" strokeWidth="1.400" /><rect x="3" y="3" width="9" height="7" fill="#222" /><rect x="20" y="4" width="2" height="5" fill="#222" /></svg></TrayIcon>
          <Clock>15:00<br />2/20/2025</Clock>
          <TrayIcon $w={38}><svg width="18" height="22" viewBox="0 0 18 22"><path d="M0 16c2-2 2-5 2-8 1-9 13-9 14 0 0 3 0 6 2 8z" fill="#0a4f9e" /><path d="M5 18h8l-2 3H7z" fill="#0a4f9e" /></svg></TrayIcon>
        </Tray>
      </Taskbar>
      <Menu>
        <MenuList>
          {menu.map(([t, d], i) => (
            <MenuItem key={t} $lines={d.includes('\n') ? 2 : 1}>
              <MenuIcon>{menuIcons[i]}</MenuIcon>
              <div>
                <MenuTitle>{t}</MenuTitle>
                {d && <MenuDesc>{d}</MenuDesc>}
              </div>
            </MenuItem>
          ))}
        </MenuList>
        <ScrollCol>
          <C d="#666" />
          <ScrollThumb />
          <C d="#666" />
        </ScrollCol>
      </Menu>
      <RedArrow width="100" height="26" viewBox="0 0 100 26">
        <path d="M0 13 25 1v9h74v5H25v10z" fill="#e01b22" />
      </RedArrow>
    </Page>
  );
}
